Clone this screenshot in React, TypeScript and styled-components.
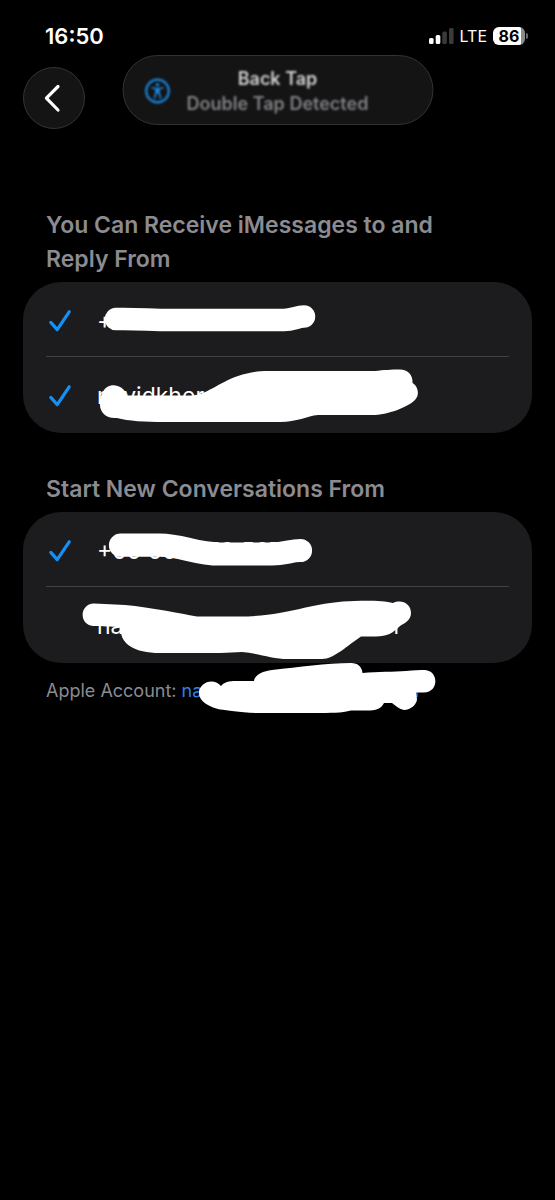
import React from "react";
import styled, { createGlobalStyle } from "styled-components";

const GlobalStyle = createGlobalStyle`
  *, *::before, *::after { box-sizing: border-box; }
  html, body { margin: 0; background: #000; }
  body {
    color: #fff;
    font-family: Inter, "Liberation Sans", sans-serif;
    -webkit-font-smoothing: antialiased;
  }
`;

const Screen = styled.div`
  position: relative;
  min-height: 100vh;
  background: #000;
`;

const StatusBar = styled.header`
  display: flex;
  align-items: center;
  justify-content: space-between;
  height: 67px;
  padding: 4px 27px 0 45px;
`;

const Clock = styled.time`
  font-size: 22px;
  line-height: 28px;
  font-weight: 600;
`;

const Indicators = styled.div`
  display: flex;
  align-items: center;
  gap: 6px;
`;

const Network = styled.span`
  font-size: 16px;
  line-height: 20px;
`;

const Battery = styled.div`
  display: flex;
  align-items: center;
  gap: 1px;
`;

const BatteryBody = styled.div`
  width: 32px;
  height: 18px;
  border-radius: 6px;
  background: linear-gradient(to right, #fff 86%, #8a8a8a 86%);
  color: #000;
  font-size: 16px;
  line-height: 18px;
  font-weight: 700;
  text-align: center;
`;

const BatteryTip = styled.div`
  width: 2px;
  height: 6px;
  border-radius: 0 2px 2px 0;
  background: #6a6a6a;
`;

const NavBar = styled.nav`
  display: flex;
  padding: 0 23px;
`;

const BackButton = styled.button`
  display: grid;
  place-items: center;
  width: 62px;
  height: 62px;
  padding: 0;
  border: 1px solid #343436;
  border-radius: 50%;
  background: #141415;
  color: #fff;
`;

const Banner = styled.aside`
  position: absolute;
  top: 55px;
  left: 50%;
  width: 311px;
  height: 70px;
  transform: translateX(-50%);
  display: grid;
  place-items: center;
  padding-top: 1px;
  border: 1px solid #333335;
  border-radius: 35px;
  background: #141415;
  text-align: center;
`;

const BannerIcon = styled.svg`
  position: absolute;
  left: 21px;
  top: 22px;
  filter: blur(1px);
`;

const BannerText = styled.div<{ $dim?: boolean }>`
  color: ${(p) => (p.$dim ? "#828285" : "#d2d2d4")};
  font-size: 18px;
  line-height: 25px;
  font-weight: 600;
  filter: blur(1px);
`;

const Main = styled.main`
  padding: 79px 23px 0;
`;

const Section = styled.section`
  margin-bottom: 39px;
`;

const Heading = styled.h2`
  margin: 0;
  padding: 0 69px 6px 23px;
  color: #8b8b90;
  font-size: 23px;
  line-height: 34px;
  font-weight: 600;
`;

const Card = styled.div`
  position: relative;
  padding: 0 23px;
  border-radius: 38px;
  background: #1c1c1e;
`;

const Row = styled.label`
  display: flex;
  align-items: center;
  height: 76px;
  padding-top: 1px;
  gap: 23px;
  font-size: 23px;
  line-height: 28px;
  white-space: pre;

  &:not(:last-of-type) {
    height: 75px;
    padding-top: 3px;
    border-bottom: 1px solid #414144;
  }
`;

const HiddenInput = styled.input`
  position: absolute;
  opacity: 0;
  pointer-events: none;
`;

const CheckSlot = styled.span`
  display: flex;
  width: 28px;
  height: 24px;
`;

const Tail = styled.span<{ $gap: number }>`
  margin-left: ${(p) => p.$gap}px;
`;

const Scribble = styled.svg`
  position: absolute;
  top: 0;
  left: 0;
  overflow: visible;
  pointer-events: none;
`;

const Footnote = styled.p`
  position: relative;
  margin: 0;
  padding: 15px 23px 0;
  color: #8b8b90;
  font-size: 18px;
  line-height: 26px;
`;

const AccountLink = styled.a`
  color: #2f7fe8;
  text-decoration: none;
`;

type OptionProps = {
  type: "checkbox" | "radio";
  name: string;
  text: string;
  tail?: string;
  tailGap?: number;
  checked?: boolean;
};

function Option({ type, name, text, tail, tailGap = 0, checked }: OptionProps) {
  return (
    <Row>
      <HiddenInput type={type} name={name} defaultChecked={checked} />
      <CheckSlot>
        {checked && (
          <svg width="28" height="24" viewBox="0 0 28 24" fill="none" aria-hidden="true">
            <path
              d="M4.8 13.4 L11.2 20.6 L23.2 2.8"
              stroke="#1591f5"
              strokeWidth="3.2"
              strokeLinecap="round"
              strokeLinejoin="round"
            />
          </svg>
        )}
      </CheckSlot>
      <span>
        {text}
        {tail && <Tail $gap={tailGap}>{tail}</Tail>}
      </span>
    </Row>
  );
}

export default function App() {
  return (
    <Screen>
      <GlobalStyle />
      <StatusBar>
        <Clock>16:50</Clock>
        <Indicators>
          <svg width="25" height="18" viewBox="0 0 25 18" aria-hidden="true">
            <rect x="0" y="11" width="4.6" height="6" rx="1.5" fill="#fff" />
            <rect x="6.7" y="8" width="4.6" height="9" rx="1.5" fill="#fff" />
            <rect x="13.3" y="4.5" width="4.6" height="12.5" rx="1.5" fill="#3a3a3a" />
            <rect x="20" y="1" width="4.6" height="16" rx="1.5" fill="#3a3a3a" />
          </svg>
          <Network>LTE</Network>
          <Battery>
            <BatteryBody>86</BatteryBody>
            <BatteryTip />
          </Battery>
        </Indicators>
      </StatusBar>

      <NavBar>
        <BackButton type="button" aria-label="Back">
          <svg width="20" height="30" viewBox="0 0 20 30" fill="none" aria-hidden="true">
            <path
              d="M14 3.5 L2.4 15.2 L14 27"
              stroke="currentColor"
              strokeWidth="3.2"
              strokeLinecap="round"
              strokeLinejoin="round"
            />
          </svg>
        </BackButton>
      </NavBar>

      <Banner>
        <BannerIcon width="26" height="26" viewBox="0 0 26 26" fill="none" aria-hidden="true">
          <circle cx="13" cy="13" r="11.3" stroke="#1a86de" strokeWidth="2.2" />
          <circle cx="13" cy="6.8" r="1.8" fill="#1a86de" />
          <path
            d="M7.5 9.8 L11.5 10.8 V14.5 L10 20 M18.5 9.8 L14.5 10.8 V14.5 L16 20"
            stroke="#1a86de"
            strokeWidth="1.7"
            strokeLinecap="round"
            strokeLinejoin="round"
          />
          <rect x="11.3" y="9.8" width="3.4" height="5.7" fill="#1a86de" />
        </BannerIcon>
        <div>
          <BannerText>Back Tap</BannerText>
          <BannerText $dim>Double Tap Detected</BannerText>
        </div>
      </Banner>

      <Main>
        <Section>
          <Heading>You Can Receive iMessages to and Reply From</Heading>
          <Card>
            <Option type="checkbox" name="receive" text="+" checked />
            <Option type="checkbox" name="receive" text="navidkher" checked />
            <Scribble width="508" height="151" viewBox="23 282 508 151" aria-hidden="true">
              <path
                d="M116 319 C138 318.5 150 320 170 320 H284 C293 320 297 316.5 304 316.5"
                fill="none"
                stroke="#fff"
                strokeWidth="22.5"
                strokeLinecap="round"
              />
              <path
                d="M100 405 C99 399 102 394 103 392 C107 382 123 383 127 395.5 H192 C206 395 218 383 238 376 C248 372.5 256 371 268 371 H375 C384 370 390 369.5 401 369.5 C409 370 413 376 412.5 383 C418 386 420 395 415 400 C408 407 388 415 372 415 H318 C307 416 297 422 280 422 H165 C145 422 128 421 117 418 C106 419 100 412 100 405 Z"
                fill="#fff"
              />
            </Scribble>
          </Card>
        </Section>

        <Section>
          <Heading>Start New Conversations From</Heading>
          <Card>
            <Option type="radio" name="start" text="+00 00" tail="10 507" tailGap={34} checked />
            <Option type="radio" name="start" text="na" tail="r" tailGap={270} />
            <Scribble width="508" height="151" viewBox="23 512 508 151" aria-hidden="true">
              <path
                d="M120.5 545.2 H160 C182 545.2 195 554 220 554 H272 C285 554 290 550.5 300.5 550.5"
                fill="none"
                stroke="#fff"
                strokeWidth="23.2"
                strokeLinecap="round"
              />
              <path
                d="M94 603.5 C108 604.5 122 604 135 606 C158 609 178 613 197 616.5 H248 C292 614 305 605 343 601.5 C360 600.5 382 600 393 603 C402 599 411 604 411 613 C411 620 405 623 400 626 C393 633 387 636.5 376 636.5 H361 C348 645 334 659 322 659 H288 C272 659 257 653 242 652 C220 653.5 190 653 160 653 C132 653 119 642 121 627 C110 627 103 626 93 626 C79 625 79 604 94 603.5 Z"
                fill="#fff"
              />
            </Scribble>
          </Card>
          <Footnote>
            Apple Account:{" "}
            <AccountLink href="#account">
              na<Tail $gap={201}>m</Tail>
            </AccountLink>
            <Scribble width="508" height="50" viewBox="23 663 508 50" aria-hidden="true">
              <path
                d="M199 693 C199 683 213 677 221 686 C224 682 229 681 236 681 H254 C255 674 264 671 272 670 C300 667 325 663 351 663 C358 663 362 667 362.5 673 C378 671.5 394 672 406 671 C414 670 420 670 425 670 C439 671 439 692 424 692.5 H416 L417 699 C417 704 411 710 404 710 C399 709 396 706 392 703 H384 C381 709 376 710.5 367 710.5 H351 C342 713 330 713 315 713 H260 C240 713 228 710 220 709.5 C210 707 199 702 199 693 Z"
                fill="#fff"
              />
            </Scribble>
          </Footnote>
        </Section>
      </Main>
    </Screen>
  );
}
